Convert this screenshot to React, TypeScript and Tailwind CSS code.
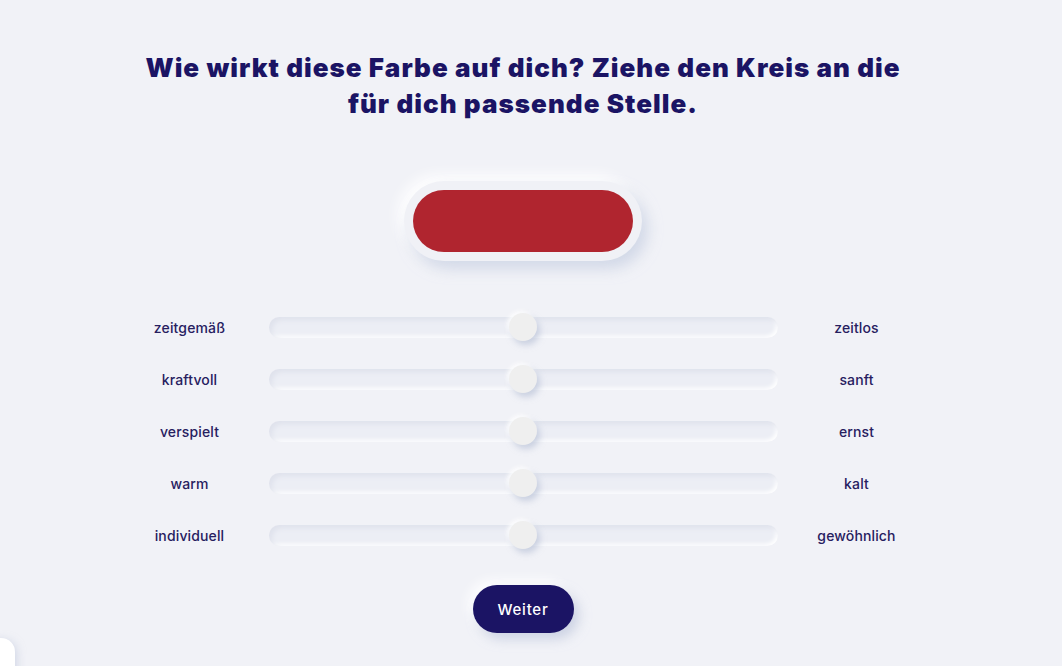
import { useState } from "react";

type Pair = { id: string; left: string; right: string };

const pairs: Pair[] = [
  { id: "zeit", left: "zeitgemäß", right: "zeitlos" },
  { id: "kraft", left: "kraftvoll", right: "sanft" },
  { id: "spiel", left: "verspielt", right: "ernst" },
  { id: "temp", left: "warm", right: "kalt" },
  { id: "indi", left: "individuell", right: "gewöhnlich" },
];

function SliderRow({ pair }: { pair: Pair }) {
  const [value] = useState(50);

  return (
    <div className="flex h-[52px] items-center gap-[19px]">
      <span className="w-[120px] text-center font-['Inter',sans-serif] text-[14px] font-medium tracking-[0.01em] text-[#27205f]">
        {pair.left}
      </span>
      <div className="relative h-[21px] w-[509px] rounded-full bg-[#eceef5] shadow-[inset_3px_3px_5px_#dfe2ec,inset_-2px_-2px_4px_#ffffff]">
        <div
          className="absolute top-1/2 size-[28px] -translate-x-1/2 -translate-y-1/2 rounded-full bg-[#efefef] shadow-[3px_4px_6px_rgba(170,180,205,0.55),-2px_-2px_4px_rgba(255,255,255,0.9)]"
          style={{ left: `${value}%` }}
        />
      </div>
      <span className="w-[120px] text-center font-['Inter',sans-serif] text-[14px] font-medium tracking-[0.01em] text-[#27205f]">
        {pair.right}
      </span>
    </div>
  );
}

export default function App() {
  return (
    <div className="relative min-h-[666px] w-full overflow-hidden bg-[#f1f2f7]">
      <div className="flex w-[1046px] flex-col items-center pt-[50px]">
        <h1 className="whitespace-nowrap text-center font-['Inter',sans-serif] text-[26px] font-black leading-[36px] tracking-[0.04em] text-[#1b1464]">
          Wie wirkt diese Farbe auf dich? Ziehe den Kreis an die
          <br />
          für dich passende Stelle.
        </h1>

        <div className="mt-[59px] h-[80px] w-[238px] rounded-full bg-[#f0f1f6] p-[9px] shadow-[6px_8px_14px_rgba(190,200,222,0.6),-6px_-6px_14px_rgba(255,255,255,0.95)]">
          <div className="h-full w-full rounded-full bg-[#b0252f]" />
        </div>

        <div className="mt-[40px] flex flex-col">
          {pairs.map((pair) => (
            <SliderRow key={pair.id} pair={pair} />
          ))}
        </div>

        <button
          type="button"
          className="mt-[24px] h-[48px] w-[101px] rounded-full bg-[#1b1464] pt-[3px] font-['Inter',sans-serif] text-[15px] font-medium tracking-[0.05em] text-white shadow-[5px_6px_12px_rgba(180,190,215,0.6),-5px_-5px_12px_rgba(255,255,255,0.9)]"
        >
          Weiter
        </button>
      </div>

      <div className="absolute left-[-34px] top-[638px] h-[60px] w-[49px] rounded-[14px] bg-white shadow-[2px_2px_8px_rgba(180,190,215,0.5)]" />
    </div>
  );
}
